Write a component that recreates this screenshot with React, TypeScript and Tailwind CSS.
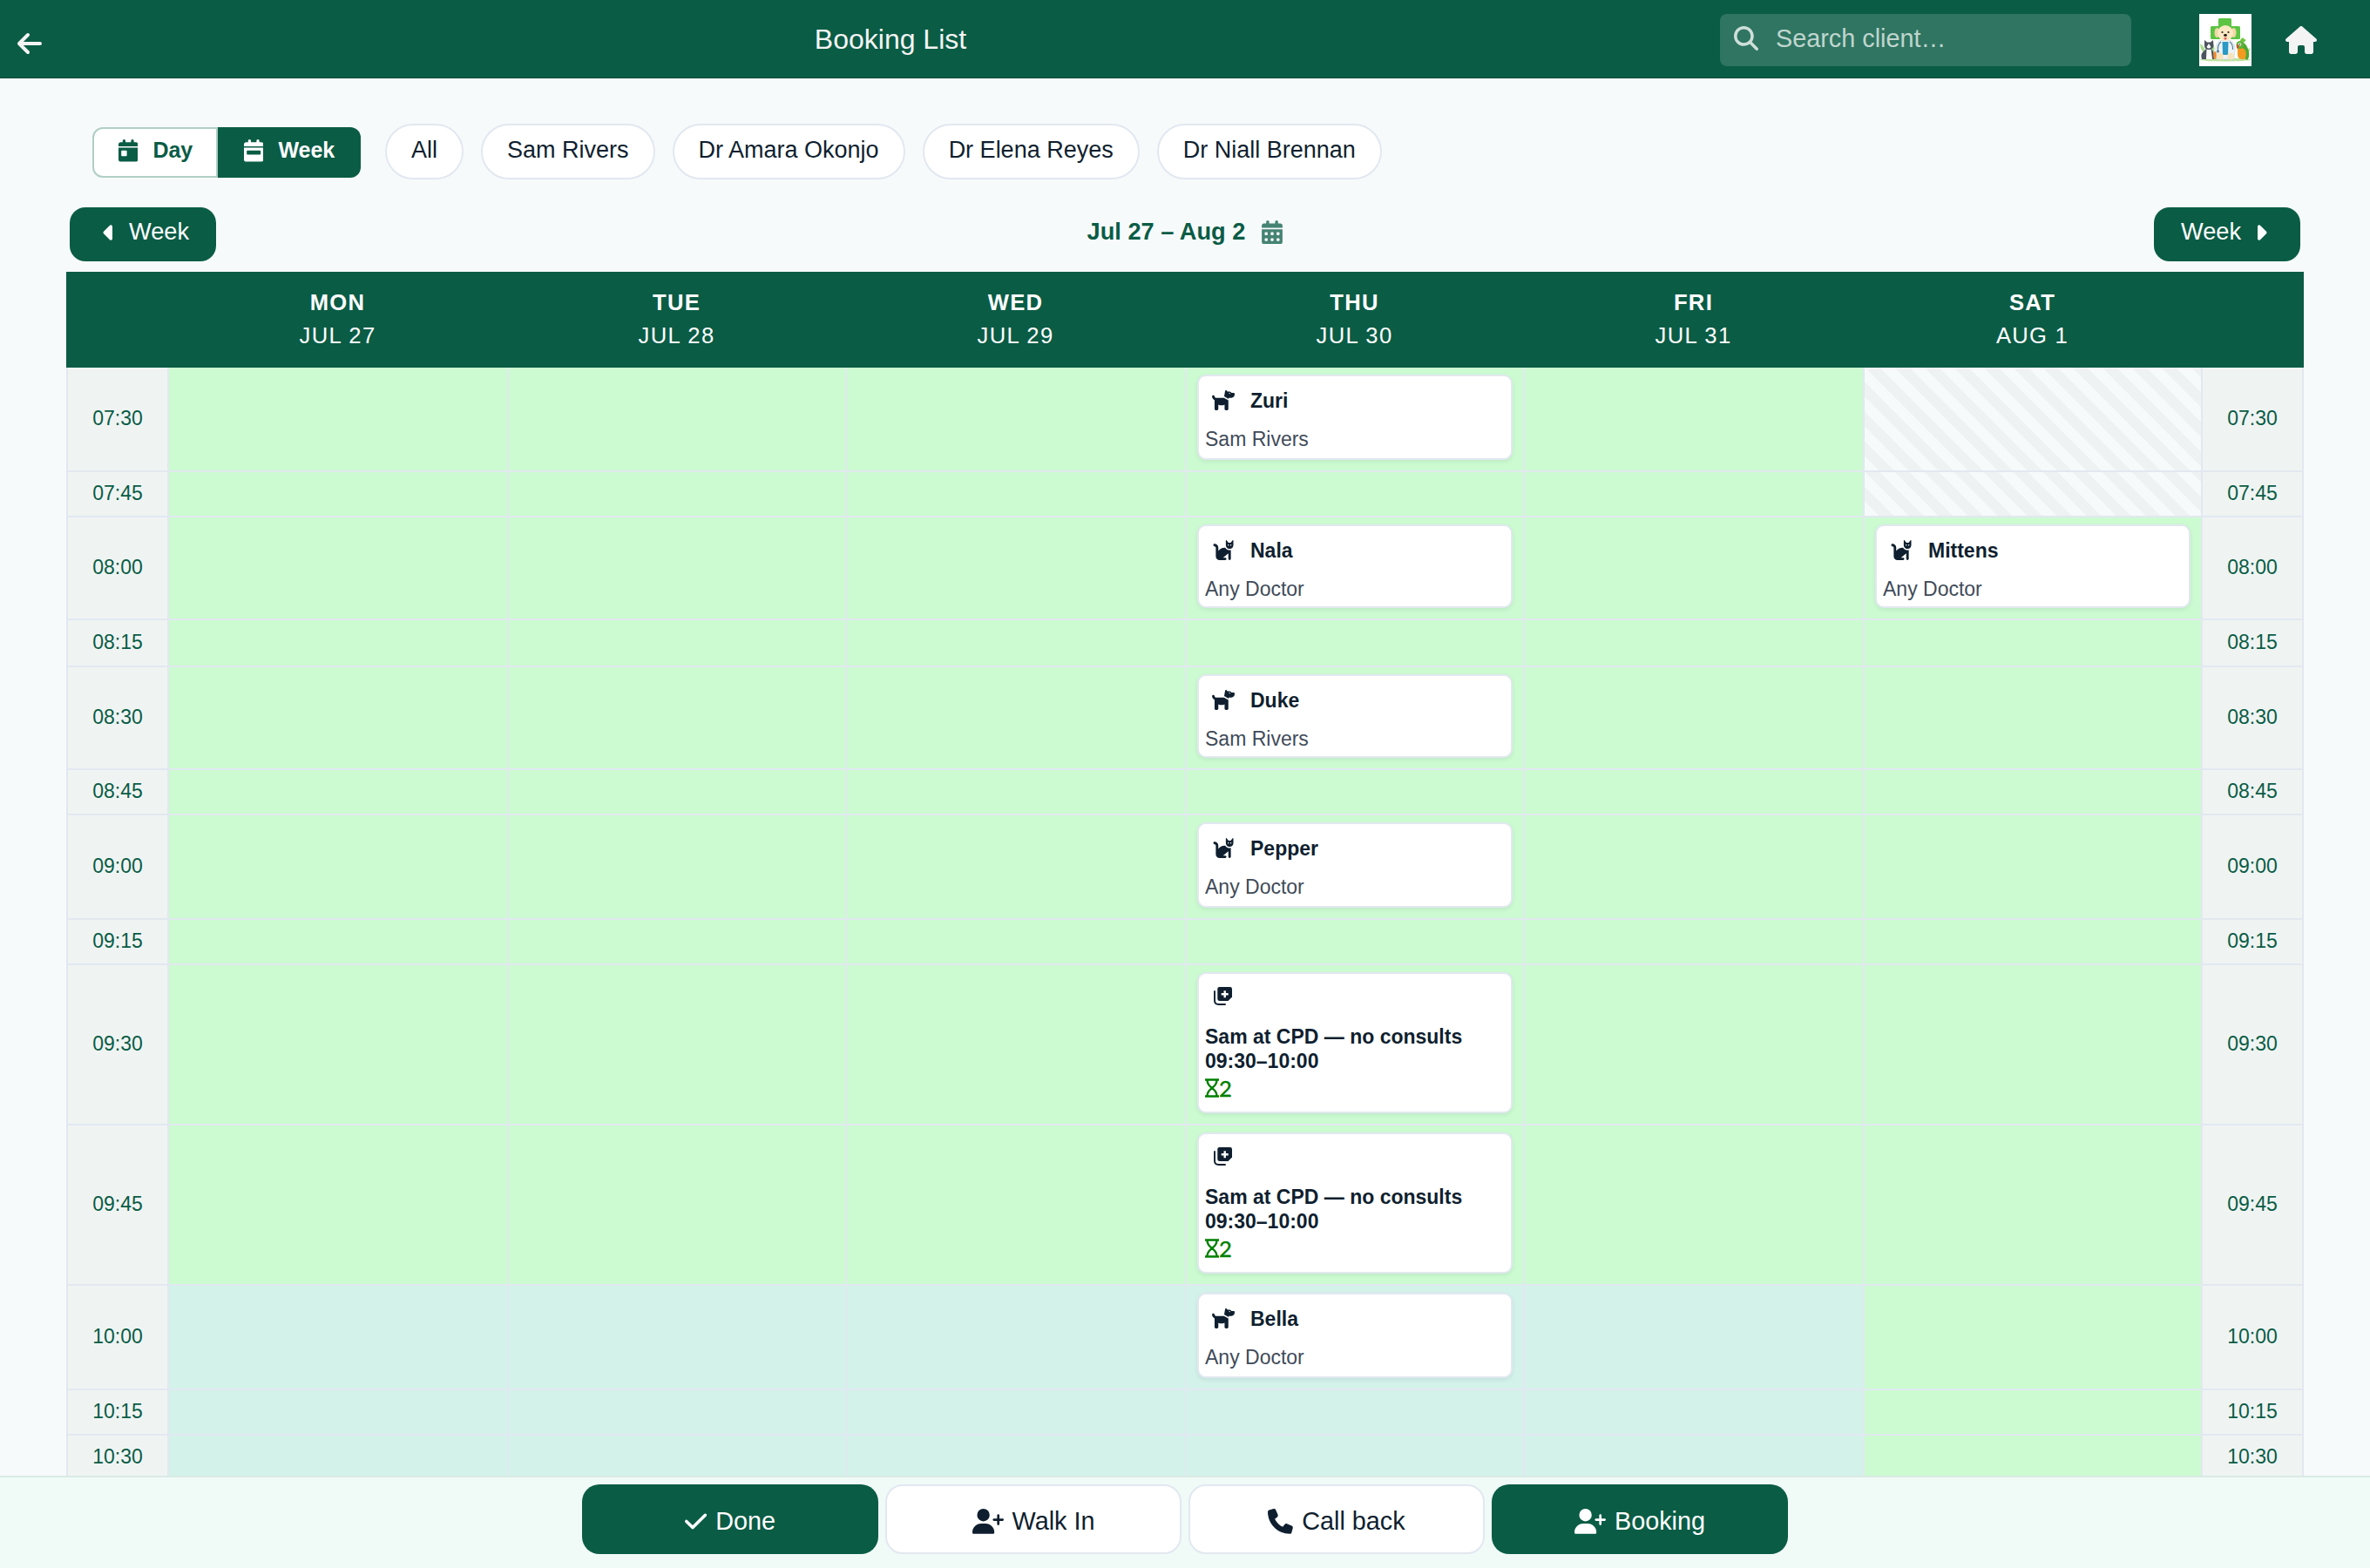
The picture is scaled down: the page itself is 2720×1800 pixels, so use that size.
import { clsx } from "clsx";
import {
  FaArrowLeft,
  FaCalendarDay,
  FaCalendarDays,
  FaCalendarWeek,
  FaCaretLeft,
  FaCaretRight,
  FaCat,
  FaCheck,
  FaDog,
  FaHouse,
  FaMagnifyingGlass,
  FaPhone,
  FaUserPlus,
} from "react-icons/fa6";

type Kind = "dog" | "cat" | "note";
type Booking = { kind: Kind; title: string; doctor?: string; slots?: number };
type Slot = {
  time: string;
  height: string;
  shade: "open" | "late";
  satClosed?: boolean;
  thu?: Booking;
  sat?: Booking;
};

const DAYS = [
  { day: "Mon", date: "Jul 27" },
  { day: "Tue", date: "Jul 28" },
  { day: "Wed", date: "Jul 29" },
  { day: "Thu", date: "Jul 30" },
  { day: "Fri", date: "Jul 31" },
  { day: "Sat", date: "Aug 1" },
];

const DOCTORS = ["All", "Sam Rivers", "Dr Amara Okonjo", "Dr Elena Reyes", "Dr Niall Brennan"];

const CPD: Booking = { kind: "note", title: "Sam at CPD — no consults 09:30–10:00", slots: 2 };

const SLOTS: Slot[] = [
  { time: "07:30", height: "h-[120px]", shade: "open", satClosed: true, thu: { kind: "dog", title: "Zuri", doctor: "Sam Rivers" } },
  { time: "07:45", height: "h-[52px]", shade: "open", satClosed: true },
  {
    time: "08:00",
    height: "h-[118px]",
    shade: "open",
    thu: { kind: "cat", title: "Nala", doctor: "Any Doctor" },
    sat: { kind: "cat", title: "Mittens", doctor: "Any Doctor" },
  },
  { time: "08:15", height: "h-[54px]", shade: "open" },
  { time: "08:30", height: "h-[118px]", shade: "open", thu: { kind: "dog", title: "Duke", doctor: "Sam Rivers" } },
  { time: "08:45", height: "h-[52px]", shade: "open" },
  { time: "09:00", height: "h-[120px]", shade: "open", thu: { kind: "cat", title: "Pepper", doctor: "Any Doctor" } },
  { time: "09:15", height: "h-[52px]", shade: "open" },
  { time: "09:30", height: "h-[184px]", shade: "open", thu: CPD },
  { time: "09:45", height: "h-[184px]", shade: "open", thu: CPD },
  { time: "10:00", height: "h-[120px]", shade: "late", thu: { kind: "dog", title: "Bella", doctor: "Any Doctor" } },
  { time: "10:15", height: "h-[52px]", shade: "late" },
  { time: "10:30", height: "h-[52px]", shade: "late" },
];

const COLS = "grid grid-cols-[116px_390px_388px_390px_388px_390px_388px_118px]";

function ClinicLogo() {
  return (
    <svg viewBox="0 0 60 60" className="size-[60px]">
      <rect width="60" height="60" fill="#fff" />
      {/* cross */}
      <path d="M23.500 5h12q1.500 0 1.500 1.500V14h8.500q1.500 0 1.500 1.500v12q0 1.500-1.500 1.500h-31q-1.500 0-1.500-1.500v-12q0-1.500 1.500-1.500H22V6.500Q22 5 23.500 5z" fill="#5bc443" />
      <ellipse cx="30" cy="52.500" rx="29" ry="2" fill="#bfe3a0" />
      <path d="M1 34q6 3 6 12Q1 42 1 34zM16 35q3 5 0 10 -3-4 0-10zM58 39q0 7-5 10 0-7 5-10z" fill="#a5dc8c" />
      {/* doctor dog */}
      <path d="M23 31q7-3 14 0 4 3 4 9l-1 12H20l-1-12q0-6 4-9z" fill="#eef3f6" stroke="#c3d0d8" strokeWidth=".6" />
      <path d="M26.500 32h7l-.5 15h-6z" fill="#2a9ac4" />
      <path d="M25 32q-4 3-3.500 10M35 32q4 3 3.500 9" fill="none" stroke="#4f7d98" strokeWidth="1.100" />
      <circle cx="21.500" cy="43" r="1.500" fill="#4f7d98" />
      <ellipse cx="24" cy="48.500" rx="3.800" ry="4" fill="#f7e3bb" />
      <ellipse cx="36" cy="48.500" rx="3.800" ry="4" fill="#f7e3bb" />
      <ellipse cx="20.500" cy="21.500" rx="3" ry="5.500" fill="#f1d7a6" />
      <ellipse cx="39.500" cy="21.500" rx="3" ry="5.500" fill="#f1d7a6" />
      <ellipse cx="30" cy="22" rx="9" ry="9" fill="#fbe9c4" />
      <circle cx="26.500" cy="21" r="1.100" fill="#33231b" />
      <circle cx="33.500" cy="21" r="1.100" fill="#33231b" />
      <ellipse cx="30" cy="24.500" rx="2" ry="1.400" fill="#2b1d18" />
      <path d="M28.500 27h3v1.800q-1.500 1.800-3 0z" fill="#e5605c" />
      {/* cat */}
      <path d="M3 52q-2-6 2-9l3-3h6q4 5 3 12z" fill="#4c545f" />
      <path d="M8.500 40h5l1.500 12H8z" fill="#fff" />
      <path d="M6 30l3 2.500h4L16 30l.5 7q-1 4-5.500 4T6 37z" fill="#4c545f" />
      <path d="M11 34l2.500 4q-2.500 3-5 0z" fill="#fff" />
      {/* hamster */}
      <ellipse cx="18" cy="47.500" rx="1.800" ry="4.500" fill="#f08b32" />
      {/* parrot */}
      <path d="M49 32q6 2 8 12 1 6-2 9l-9-6z" fill="#4fa832" />
      <path d="M44 39q6-2 9 3 2 6-1 10-8 1-8-5z" fill="#f39a21" />
      <path d="M47 31q1-4 4-3.500 0 2 3 2-2 3-3 3z" fill="#6cc53c" />
      <circle cx="47" cy="35.500" r="4.500" fill="#5cb336" />
      <circle cx="46.500" cy="35" r="1.800" fill="#fff" />
      <circle cx="46.500" cy="35" r=".8" fill="#222" />
      <path d="M44 35q-2 2-.5 5 2-1 2.500-4z" fill="#d94a28" />
    </svg>
  );
}

function NoteIcon() {
  return (
    <svg viewBox="0 0 21 21" className="mr-px mb-1 size-[21px]">
      <path d="M6.500 0h12.200Q21 0 21 2.300v9.200L16.500 16H6.800Q4.300 16 4.300 13.700V2.300Q4.300 0 6.500 0z" fill="currentColor" />
      <path d="M1 5v10.500Q1 20 5.500 20H13" fill="none" stroke="currentColor" strokeWidth="1.900" strokeLinecap="round" />
      <path d="M12.700 4.300v8M8.700 8.300h8" stroke="#fff" strokeWidth="2.400" />
    </svg>
  );
}

function Hourglass() {
  return (
    <svg viewBox="0 0 16 22" className="h-[22px] w-4" fill="none" stroke="currentColor" strokeWidth="2.400">
      <path d="M0 1.500h16M0 20.500h16" />
      <path d="M2.500 1.500c0 5 2.500 7 5.500 9.500 3 2.500 5.500 4.500 5.500 9.500M13.500 1.500c0 5-2.500 7-5.500 9.500-3 2.500-5.500 4.500-5.500 9.500" />
    </svg>
  );
}

function BookingCard({ booking }: { booking: Booking }) {
  return (
    <div className="mx-3 mt-2 mb-3 flex-1 rounded-[10px] border-2 border-[#e2e8f0] bg-white px-[7px] text-[23px] text-[#0f1f2f] shadow-[0_2px_5px_rgba(15,31,47,0.08)]">
      <div className="flex h-[55px] items-center gap-2.5">
        <span className="flex w-[42px] justify-center">
          {booking.kind === "dog" && <FaDog className="h-[23px] w-[26px]" />}
          {booking.kind === "cat" && <FaCat className="h-[23px] w-[26px]" />}
          {booking.kind === "note" && <NoteIcon />}
        </span>
        {booking.doctor && <span className="font-bold leading-[28px]">{booking.title}</span>}
      </div>
      {booking.doctor ? (
        <div className="mt-[3px] leading-[28px] text-[#3f4b59]">{booking.doctor}</div>
      ) : (
        <>
          <div className="mt-[3px] w-[310px] font-bold leading-[28px]">{booking.title}</div>
          <div className="mt-1 flex h-[26px] items-center font-['Lato',sans-serif] text-[25.6px] leading-[26px] text-[#008000]">
            <Hourglass />
            <span className="[-webkit-text-stroke:0.4px_#008000]">{booking.slots}</span>
          </div>
        </>
      )}
    </div>
  );
}

function TimeCell({ time, last }: { time: string; last?: boolean }) {
  return (
    <div
      className={clsx(
        "flex items-center justify-center border-b-2 border-l-2 border-[#e2e8f0] bg-[#eff4f3] pb-px text-[23px] text-[#0a5c45]",
        last && "border-r-2"
      )}
    >
      {time}
    </div>
  );
}

function WeekGrid() {
  return (
    <div className="mx-[76px] min-h-0 flex-1 overflow-hidden">
      <div className={clsx(COLS, "h-[110px] bg-[#0a5c45] pt-4 text-center text-[25.6px] leading-[38px] tracking-[1.28px] text-white uppercase")}>
        <div />
        {DAYS.map((d) => (
          <div key={d.day} className="pl-px">
            <div className="font-bold">{d.day}</div>
            <div>{d.date}</div>
          </div>
        ))}
        <div />
      </div>
      {SLOTS.map((slot) => (
        <div key={slot.time} className={clsx(COLS, slot.height)}>
          <TimeCell time={slot.time} />
          {DAYS.map((d) => {
            const isSat = d.day === "Sat";
            const booking = d.day === "Thu" ? slot.thu : isSat ? slot.sat : undefined;
            return (
              <div
                key={d.day}
                className={clsx(
                  "flex border-b-2 border-l-2 border-[#e2e8f0]",
                  isSat && slot.satClosed
                    ? "bg-[repeating-linear-gradient(45deg,#f7fafb_0,#f7fafb_12px,#eef2f3_12px,#eef2f3_24px)]"
                    : slot.shade === "late" && !isSat
                      ? "bg-[#d3f2ea]"
                      : "bg-[#ccfbd1]"
                )}
              >
                {booking && <BookingCard booking={booking} />}
              </div>
            );
          })}
          <TimeCell time={slot.time} last />
        </div>
      ))}
    </div>
  );
}

export default function App() {
  return (
    <div className="flex h-[1800px] w-[2720px] flex-col overflow-hidden bg-[#f7fafb] font-['Liberation_Sans',Arial,sans-serif] text-[#0f1f2f]">
      <header className="flex h-[90px] shrink-0 items-center border-b border-[#0a4d3b] bg-[#0a5c45] text-[#f4f4f4]">
        <button className="mt-[11px] ml-5 w-[50px]">
          <FaArrowLeft className="h-8 w-7" />
        </button>
        <h1 className="flex-1 text-center text-[32px] leading-[36px]">Booking List</h1>
        <div className="mt-[3px] flex h-[60px] w-[472px] items-center gap-5 rounded-lg bg-[#2f7562] pl-4">
          <FaMagnifyingGlass className="mb-1 size-7 text-[#cfdfda]" />
          <span className="pb-1 text-[28.8px] leading-8 text-[#c0d5ce]">Search client…</span>
        </div>
        <div className="mt-[3px] ml-[78px]">
          <ClinicLogo />
        </div>
        <FaHouse className="mt-[3px] mr-[61px] ml-[39px] h-8 w-9" />
      </header>

      {/* View switch and doctor filters */}
      <div className="mt-[52px] ml-[106px] flex h-16 shrink-0 items-start">
        <div className="mt-1 flex h-[58px] text-[25px] font-bold">
          <button className="flex w-[144px] items-center gap-[17px] rounded-l-xl border-2 border-[#b0cec5] bg-white pb-1 pl-7 text-[#0a5c45]">
            <FaCalendarDay className="h-[25.6px] w-[22.4px]" />
            Day
          </button>
          <button className="flex w-[164px] items-center gap-[17px] rounded-r-xl bg-[#0a5c45] pb-1 pl-[30px] text-white">
            <FaCalendarWeek className="h-[25.6px] w-[22.4px]" />
            Week
          </button>
        </div>
        <div className="ml-7 flex gap-5">
          {DOCTORS.map((name) => (
            <button
              key={name}
              className="h-16 rounded-full border-2 border-[#e2e8f0] bg-white px-7 pb-1 text-[27px]"
            >
              {name}
            </button>
          ))}
        </div>
      </div>

      {/* Week navigation */}
      <div className="mx-20 mt-8 mb-3 flex h-[62px] shrink-0 items-center justify-between text-[27.2px]">
        <button className="flex h-[62px] w-[168px] items-center gap-3.5 rounded-[18px] bg-[#0a5c45] pb-[5px] pl-[37px] text-white">
          <FaCaretLeft className="h-7 w-[17px]" />
          Week
        </button>
        <div className="flex items-center gap-[19px] pb-[5px] font-bold text-[#0a5c45]">
          Jul 27 – Aug 2
          <FaCalendarDays className="h-[27.2px] w-6 opacity-75" />
        </div>
        <button className="flex h-[62px] w-[168px] items-center gap-3.5 rounded-[18px] bg-[#0a5c45] pb-[5px] pl-[31px] text-white">
          Week
          <FaCaretRight className="h-7 w-[17px]" />
        </button>
      </div>

      <WeekGrid />

      <footer className="flex h-[106px] shrink-0 justify-center gap-2 border-t-2 border-[#d9ebe4] bg-[#f0faf7] pt-2 text-[28.8px]">
        <button className="flex h-20 w-[340px] items-center justify-center gap-2.5 rounded-[20px] bg-[#0a5c45] pt-[5px] text-white">
          <FaCheck className="h-[28.8px] w-[25.2px]" />
          Done
        </button>
        <button className="flex h-20 w-[340px] items-center justify-center gap-2.5 rounded-[20px] border-2 border-[#e2e8f0] bg-white pt-[5px]">
          <FaUserPlus className="h-[28.8px] w-9" />
          Walk In
        </button>
        <button className="flex h-20 w-[340px] items-center justify-center gap-2.5 rounded-[20px] border-2 border-[#e2e8f0] bg-white pt-[5px]">
          <FaPhone className="size-[28.8px]" />
          Call back
        </button>
        <button className="flex h-20 w-[340px] items-center justify-center gap-2.5 rounded-[20px] bg-[#0a5c45] pt-[5px] text-white">
          <FaUserPlus className="h-[28.8px] w-9" />
          Booking
        </button>
      </footer>
    </div>
  );
}
